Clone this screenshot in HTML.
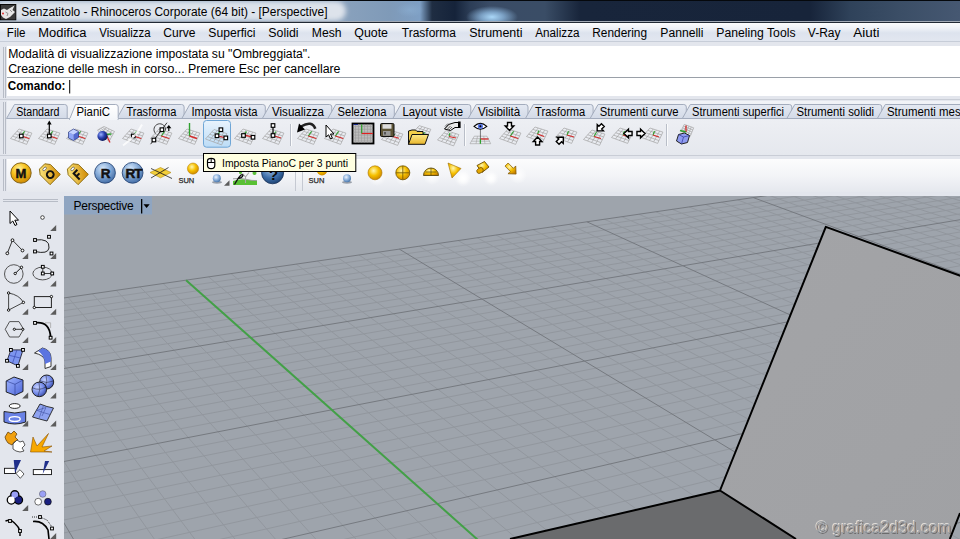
<!DOCTYPE html>
<html><head><meta charset="utf-8">
<style>
*{margin:0;padding:0;box-sizing:border-box}
html,body{width:960px;height:539px;overflow:hidden;background:#e3e6ed;font-family:"Liberation Sans",sans-serif;position:relative}
.a{position:absolute}
#title{left:0;top:0;width:960px;height:21px;overflow:hidden;
background:
radial-gradient(ellipse 26px 11px at 492px 17px,rgba(170,215,248,1) 0%,rgba(150,195,235,0.7) 45%,rgba(150,195,235,0) 100%),
radial-gradient(ellipse 14px 7px at 410px 10px,rgba(140,175,210,0.6),rgba(140,175,210,0) 100%),
linear-gradient(90deg,#8aa2bd 0px,#8aa2bd 340px,#7f9ab8 390px,#7e9fc4 420px,#1f2d42 432px,#15233a 455px,#2c3d56 470px,#3a4c66 490px,#3a4d66 545px,#18253b 580px,#17243a 810px,#2f425a 850px,#3b4e66 900px,#465872 960px);}
#title .top{left:0;top:0;width:960px;height:1px;background:#05080c}
#title .glow{left:-6px;top:1px;width:352px;height:20px;background:#dde3eb;border-radius:10px;filter:blur(2.5px)}
#title .t{left:21px;top:4px;font-size:12px;line-height:16px;color:#000;white-space:nowrap}
#tline{left:0;top:21px;width:960px;height:1px;background:#a2aab6}
#tline2{left:0;top:22px;width:960px;height:1px;background:#222a35}
#menu{left:0;top:23px;width:960px;height:18px;background:linear-gradient(#fbfcfd 0%,#eef1f7 30%,#dde3ee 55%,#e2e7f0 100%);}
#menu span{position:absolute;top:4.5px;font-size:12px;line-height:13px;color:#000;white-space:nowrap}
#mline{left:0;top:41px;width:960px;height:1px;background:#c7cdd8}
#cmd{left:7px;top:46px;width:953px;height:50px;background:#fff;}
#cmd .l{position:absolute;left:2.5px;font-size:12px;line-height:12px;color:#000;white-space:nowrap;letter-spacing:0.1px}
.vgrip{width:1px;background:#b7bcc6}
.hgrip{height:1px;background:#b7bcc6}
.tab{position:absolute;top:104px;height:15px;font-size:11px;line-height:13px;color:#000;white-space:nowrap}
</style></head><body>
<div id="title" class="a">
 <div class="glow a"></div><div class="top a"></div>
 <svg class="a" style="left:0;top:0" width="400" height="21" viewBox="0 0 400 21"><text x="21.2" y="16.2" font-family="Liberation Sans" font-size="12" textLength="306.3" lengthAdjust="spacingAndGlyphs" fill="#000">Senzatitolo - Rhinoceros Corporate (64 bit) - [Perspective]</text></svg>
</div>
<svg class="a" style="left:0;top:4px" width="17" height="17" viewBox="0 0 17 17">
 <rect x="0.5" y="0.5" width="15.3" height="15.3" fill="#3a3a3a" stroke="#0a0a0a" stroke-width="1"/>
 <path d="M1 6 L4 4.5 L7 6 L10 4 L14.5 1.5 L12.5 6 L15 8 L10 13 L6 15 L3 13.5 L1 11 Z" fill="#e6e6e6"/>
 <path d="M5.5 8 L8 9.5 L7 12 M10 6 L12 8" fill="none" stroke="#888" stroke-width="0.9"/>
 <circle cx="3" cy="9.5" r="1" fill="#e03030"/>
</svg>
<div id="tline" class="a"></div><div id="tline2" class="a"></div>
<div id="menu" class="a"></div>
<svg class="a" style="left:0;top:0" width="960" height="45" viewBox="0 0 960 45"><g font-family="Liberation Sans" font-size="12" fill="#000"><text x="6.8" y="37" textLength="18.7" lengthAdjust="spacingAndGlyphs">File</text><text x="38.3" y="37" textLength="48.2" lengthAdjust="spacingAndGlyphs">Modifica</text><text x="99.3" y="37" textLength="51.2" lengthAdjust="spacingAndGlyphs">Visualizza</text><text x="163.3" y="37" textLength="32.2" lengthAdjust="spacingAndGlyphs">Curve</text><text x="208.3" y="37" textLength="47.2" lengthAdjust="spacingAndGlyphs">Superfici</text><text x="268.3" y="37" textLength="30.2" lengthAdjust="spacingAndGlyphs">Solidi</text><text x="311.8" y="37" textLength="29.7" lengthAdjust="spacingAndGlyphs">Mesh</text><text x="354.3" y="37" textLength="33.7" lengthAdjust="spacingAndGlyphs">Quote</text><text x="401.8" y="37" textLength="54.2" lengthAdjust="spacingAndGlyphs">Trasforma</text><text x="469.3" y="37" textLength="53.2" lengthAdjust="spacingAndGlyphs">Strumenti</text><text x="535.3" y="37" textLength="44.2" lengthAdjust="spacingAndGlyphs">Analizza</text><text x="592.3" y="37" textLength="54.7" lengthAdjust="spacingAndGlyphs">Rendering</text><text x="660.3" y="37" textLength="43.2" lengthAdjust="spacingAndGlyphs">Pannelli</text><text x="716.3" y="37" textLength="79.2" lengthAdjust="spacingAndGlyphs">Paneling Tools</text><text x="807.8" y="37" textLength="32.7" lengthAdjust="spacingAndGlyphs">V-Ray</text><text x="853.3" y="37" textLength="26.2" lengthAdjust="spacingAndGlyphs">Aiuti</text></g></svg>
<div id="mline" class="a"></div>
<div class="a vgrip" style="left:3px;top:47px;height:51px"></div>
<div class="a vgrip" style="left:5px;top:47px;height:51px"></div>
<div id="cmd" class="a"></div>
<div class="a" style="left:7px;top:77px;width:953px;height:1px;background:#9aa0a8"></div>
<svg class="a" style="left:0;top:40px" width="400" height="60" viewBox="0 40 400 60"><g font-family="Liberation Sans" font-size="12" fill="#000">
<text x="8.2" y="57.9" textLength="302.3" lengthAdjust="spacingAndGlyphs">Modalità di visualizzazione impostata su "Ombreggiata".</text>
<text x="8.2" y="73.3" textLength="332.3" lengthAdjust="spacingAndGlyphs">Creazione delle mesh in corso... Premere Esc per cancellare</text>
<text x="7.7" y="90.4" font-weight="bold" textLength="57.8" lengthAdjust="spacingAndGlyphs">Comando:</text>
</g><rect x="69.2" y="80" width="1" height="13.5" fill="#000"/></svg>
<div class="a" style="left:0;top:99px;width:960px;height:1px;background:#c9cdd6"></div>
<!-- toolbar 1 -->
<div class="a" style="left:7px;top:101px;width:953px;height:54px;background:linear-gradient(#f1f3f7,#ebedf2 50%,#e5e8ee)"></div>
<div class="a" style="left:0;top:155px;width:960px;height:1px;background:#c9cdd6"></div>
<div class="a vgrip" style="left:3px;top:102px;height:52px"></div>
<div class="a vgrip" style="left:5px;top:102px;height:52px"></div>
<!-- toolbar 2 -->
<div class="a" style="left:7px;top:159px;width:953px;height:33px;background:linear-gradient(#fcfcfd,#f3f4f7 50%,#e5e8ee)"></div>
<div class="a vgrip" style="left:3px;top:159px;height:32px"></div>
<div class="a vgrip" style="left:5px;top:159px;height:32px"></div>
<div class="a" style="left:295px;top:159px;width:1px;height:32px;background:#c5c9d2"></div>
<div class="a" style="left:302px;top:159px;width:1px;height:32px;background:#c5c9d2"></div>
<svg class="a" style="left:0;top:0" width="960" height="160" viewBox="0 0 960 160">
<defs><linearGradient id="tabi" x1="0" y1="0" x2="0" y2="1"><stop offset="0" stop-color="#e4e9f2"/><stop offset="1" stop-color="#d3dae7"/></linearGradient>
<linearGradient id="taba" x1="0" y1="0" x2="0" y2="1"><stop offset="0" stop-color="#ffffff"/><stop offset="1" stop-color="#f3f5f9"/></linearGradient></defs>
<rect x="7" y="118" width="953" height="1" fill="#a9b2c1"/>
<path d="M6.5 118.5 L14.5 104.5 L64.7 104.5 Q67.2 104.5 67.2 107.0 L67.2 118.5 Z" fill="url(#tabi)" stroke="#a3acbd" stroke-width="1"/><text x="16.2" y="115.6" font-family="Liberation Sans" font-size="12" textLength="43.2" lengthAdjust="spacingAndGlyphs" fill="#000">Standard</text>
<path d="M116.8 118.5 L124.8 104.5 L181.6 104.5 Q184.1 104.5 184.1 107.0 L184.1 118.5 Z" fill="url(#tabi)" stroke="#a3acbd" stroke-width="1"/><text x="126.5" y="115.6" font-family="Liberation Sans" font-size="12" textLength="49.8" lengthAdjust="spacingAndGlyphs" fill="#000">Trasforma</text>
<path d="M181.8 118.5 L189.8 104.5 L262.8 104.5 Q265.3 104.5 265.3 107.0 L265.3 118.5 Z" fill="url(#tabi)" stroke="#a3acbd" stroke-width="1"/><text x="191.5" y="115.6" font-family="Liberation Sans" font-size="12" textLength="66.0" lengthAdjust="spacingAndGlyphs" fill="#000">Imposta vista</text>
<path d="M262.3 118.5 L270.3 104.5 L329.3 104.5 Q331.8 104.5 331.8 107.0 L331.8 118.5 Z" fill="url(#tabi)" stroke="#a3acbd" stroke-width="1"/><text x="272.0" y="115.6" font-family="Liberation Sans" font-size="12" textLength="52.0" lengthAdjust="spacingAndGlyphs" fill="#000">Visualizza</text>
<path d="M327.8 118.5 L335.8 104.5 L391.8 104.5 Q394.3 104.5 394.3 107.0 L394.3 118.5 Z" fill="url(#tabi)" stroke="#a3acbd" stroke-width="1"/><text x="337.5" y="115.6" font-family="Liberation Sans" font-size="12" textLength="49.0" lengthAdjust="spacingAndGlyphs" fill="#000">Seleziona</text>
<path d="M392.8 118.5 L400.8 104.5 L468.3 104.5 Q470.8 104.5 470.8 107.0 L470.8 118.5 Z" fill="url(#tabi)" stroke="#a3acbd" stroke-width="1"/><text x="402.5" y="115.6" font-family="Liberation Sans" font-size="12" textLength="60.5" lengthAdjust="spacingAndGlyphs" fill="#000">Layout viste</text>
<path d="M468.2 118.5 L476.2 104.5 L525.5 104.5 Q528.0 104.5 528.0 107.0 L528.0 118.5 Z" fill="url(#tabi)" stroke="#a3acbd" stroke-width="1"/><text x="477.9" y="115.6" font-family="Liberation Sans" font-size="12" textLength="42.4" lengthAdjust="spacingAndGlyphs" fill="#000">Visibilità</text>
<path d="M525.4 118.5 L533.4 104.5 L590.6 104.5 Q593.1 104.5 593.1 107.0 L593.1 118.5 Z" fill="url(#tabi)" stroke="#a3acbd" stroke-width="1"/><text x="535.1" y="115.6" font-family="Liberation Sans" font-size="12" textLength="50.2" lengthAdjust="spacingAndGlyphs" fill="#000">Trasforma</text>
<path d="M590.1 118.5 L598.1 104.5 L683.8 104.5 Q686.3 104.5 686.3 107.0 L686.3 118.5 Z" fill="url(#tabi)" stroke="#a3acbd" stroke-width="1"/><text x="599.8" y="115.6" font-family="Liberation Sans" font-size="12" textLength="78.7" lengthAdjust="spacingAndGlyphs" fill="#000">Strumenti curve</text>
<path d="M682.3 118.5 L690.3 104.5 L789.3 104.5 Q791.8 104.5 791.8 107.0 L791.8 118.5 Z" fill="url(#tabi)" stroke="#a3acbd" stroke-width="1"/><text x="692.0" y="115.6" font-family="Liberation Sans" font-size="12" textLength="92.0" lengthAdjust="spacingAndGlyphs" fill="#000">Strumenti superfici</text>
<path d="M786.8 118.5 L794.8 104.5 L879.3 104.5 Q881.8 104.5 881.8 107.0 L881.8 118.5 Z" fill="url(#tabi)" stroke="#a3acbd" stroke-width="1"/><text x="796.5" y="115.6" font-family="Liberation Sans" font-size="12" textLength="77.5" lengthAdjust="spacingAndGlyphs" fill="#000">Strumenti solidi</text>
<path d="M877.3 118.5 L885.3 104.5 L972.3 104.5 Q974.8 104.5 974.8 107.0 L974.8 118.5 Z" fill="url(#tabi)" stroke="#a3acbd" stroke-width="1"/><text x="887.0" y="115.6" font-family="Liberation Sans" font-size="12" textLength="80.0" lengthAdjust="spacingAndGlyphs" fill="#000">Strumenti mesh</text>
<path d="M69.5 119.5 L75.5 104.5 L115.7 104.5 Q118.2 104.5 118.2 107.0 L118.2 119.5 Z" fill="url(#taba)" stroke="#a3acbd" stroke-width="1"/><rect x="70.1" y="118" width="47.5" height="2" fill="#f3f5f9"/><text x="76.5" y="115.6" font-family="Liberation Sans" font-size="12" textLength="33.5" lengthAdjust="spacingAndGlyphs" fill="#000">PianiC</text>
</svg>
<svg class="a" style="left:0;top:0" width="960" height="160" viewBox="0 0 960 160">
<defs><linearGradient id="hl" x1="0" y1="0" x2="0" y2="1"><stop offset="0" stop-color="#e8f3fd"/><stop offset="1" stop-color="#bcdcf6"/></linearGradient>
<radialGradient id="bsph" cx="0.35" cy="0.35" r="0.7"><stop offset="0" stop-color="#9ab0ff"/><stop offset="0.5" stop-color="#2a40b0"/><stop offset="1" stop-color="#0a1450"/></radialGradient>
<linearGradient id="fold" x1="0" y1="0" x2="0" y2="1"><stop offset="0" stop-color="#fde98a"/><stop offset="1" stop-color="#e8b52a"/></linearGradient></defs>
<rect x="203.5" y="120.5" width="27" height="26.7" rx="3" fill="url(#hl)" stroke="#6fa6d6" stroke-width="1"/>
<path d="M10.50 138.50L26.60 144.40M10.50 138.50L19.00 129.00M12.62 136.12L27.93 141.57M14.53 139.97L22.23 130.03M14.75 133.75L29.25 138.75M18.55 141.45L25.45 131.05M16.88 131.38L30.57 135.93M22.58 142.93L28.67 132.07M19.00 129.00L31.90 133.10M26.60 144.40L31.90 133.10" stroke="#a4a4a4" stroke-width="0.7" fill="none"/><path d="M21.3 136.0L24.6 131.3" stroke="#2ea02e" stroke-width="1.1"/><path d="M21.3 136.0L29.3 138.6" stroke="#d42a2a" stroke-width="1.1"/><rect x="19.5" y="134.2" width="3.6" height="3.6" fill="#fff" stroke="#000" stroke-width="1.15"/>
<path d="M38.50 138.50L54.60 144.40M38.50 138.50L47.00 129.00M40.62 136.12L55.92 141.57M42.52 139.97L50.23 130.03M42.75 133.75L57.25 138.75M46.55 141.45L53.45 131.05M44.88 131.38L58.58 135.93M50.58 142.93L56.67 132.07M47.00 129.00L59.90 133.10M54.60 144.40L59.90 133.10" stroke="#a4a4a4" stroke-width="0.7" fill="none"/><path d="M49.3 136.0L52.6 131.3" stroke="#2ea02e" stroke-width="1.1"/><path d="M49.3 136.0L57.3 138.6" stroke="#d42a2a" stroke-width="1.1"/><rect x="47.5" y="134.2" width="3.6" height="3.6" fill="#fff" stroke="#000" stroke-width="1.15"/><path d="M49.3 134.0L49.3 123.0" stroke="#000" stroke-width="1.2"/><path d="M49.3 120.5 L47.0 124.5 L51.6 124.5Z" fill="#000"/>
<path d="M66.50 138.50L82.60 144.40M66.50 138.50L75.00 129.00M68.62 136.12L83.92 141.57M70.53 139.97L78.22 130.03M70.75 133.75L85.25 138.75M74.55 141.45L81.45 131.05M72.88 131.38L86.58 135.93M78.57 142.93L84.68 132.07M75.00 129.00L87.90 133.10M82.60 144.40L87.90 133.10" stroke="#a4a4a4" stroke-width="0.7" fill="none"/><path d="M77.3 136.0L80.6 131.3" stroke="#2ea02e" stroke-width="1.1"/><path d="M77.3 136.0L85.3 138.6" stroke="#d42a2a" stroke-width="1.1"/><path d="M68.5 132 L73.5 129 L78.5 131.5 L73.5 134.5 Z" fill="#c4d2ff"/><path d="M68.5 132 L73.5 134.5 L73.5 140.5 L68.5 138 Z" fill="#8fa6f6"/><path d="M73.5 134.5 L78.5 131.5 L78.5 137.5 L73.5 140.5 Z" fill="#5268d0"/><path d="M68.5 132 L73.5 129 L78.5 131.5 L78.5 137.5 L73.5 140.5 L68.5 138 Z" fill="none" stroke="#2a3a80" stroke-width="0.7"/>
<path d="M97.50 130.00L109.00 141.50M97.50 130.00L104.00 126.50M99.12 129.12L110.38 139.00M100.38 132.88L106.62 127.75M100.75 128.25L111.75 136.50M103.25 135.75L109.25 129.00M102.38 127.38L113.12 134.00M106.12 138.62L111.88 130.25M104.00 126.50L114.50 131.50M109.00 141.50L114.50 131.50" stroke="#a4a4a4" stroke-width="0.7" fill="none"/><path d="M106.0 134.5L111.5 134.0" stroke="#2ea02e" stroke-width="1.3"/><path d="M106.0 134.5L110.0 142.5" stroke="#d42a2a" stroke-width="1.3"/><circle cx="102.5" cy="136" r="5.1" fill="url(#bsph)"/>
<path d="M122.50 138.50L138.60 144.40M122.50 138.50L131.00 129.00M124.62 136.12L139.93 141.57M126.53 139.97L134.22 130.03M126.75 133.75L141.25 138.75M130.55 141.45L137.45 131.05M128.88 131.38L142.57 135.93M134.57 142.93L140.68 132.07M131.00 129.00L143.90 133.10M138.60 144.40L143.90 133.10" stroke="#a4a4a4" stroke-width="0.7" fill="none"/><path d="M133.3 136.0L136.6 131.3" stroke="#2ea02e" stroke-width="1.1"/><path d="M133.3 136.0L141.3 138.6" stroke="#d42a2a" stroke-width="1.1"/><rect x="131.5" y="134.2" width="3.6" height="3.6" fill="#fff" stroke="#000" stroke-width="1.15"/><path d="M123.0 145.5 Q137.0 135.5 142.0 124.5" stroke="#fff" stroke-width="2" fill="none" opacity="0.75"/>
<path d="M150.50 138.50L166.60 144.40M150.50 138.50L159.00 129.00M152.62 136.12L167.93 141.57M154.53 139.97L162.22 130.03M154.75 133.75L169.25 138.75M158.55 141.45L165.45 131.05M156.88 131.38L170.57 135.93M162.57 142.93L168.68 132.07M159.00 129.00L171.90 133.10M166.60 144.40L171.90 133.10" stroke="#a4a4a4" stroke-width="0.7" fill="none"/><path d="M161.3 136.0L164.6 131.3" stroke="#2ea02e" stroke-width="1.1"/><path d="M161.3 136.0L169.3 138.6" stroke="#d42a2a" stroke-width="1.1"/><path d="M155.5 133.5 A5.8 5.8 0 1 1 165.5 130.5" fill="none" stroke="#333" stroke-width="0.9"/><path d="M150.6 144.2 L167 122.7" stroke="#222" stroke-width="0.9"/><rect x="160.1" y="127.9" width="3.6" height="3.6" fill="#fff" stroke="#000" stroke-width="1.15"/><rect x="152.1" y="138.2" width="3.6" height="3.6" fill="#fff" stroke="#000" stroke-width="1.15"/><path d="M168.8 125 l-2.6 3.2 h5.2z" fill="#000"/><path d="M168.8 127.5 v3.5" stroke="#000" stroke-width="1.2"/>
<path d="M178.50 138.50L194.60 144.40M178.50 138.50L187.00 129.00M180.62 136.12L195.93 141.57M182.53 139.97L190.22 130.03M182.75 133.75L197.25 138.75M186.55 141.45L193.45 131.05M184.88 131.38L198.57 135.93M190.57 142.93L196.68 132.07M187.00 129.00L199.90 133.10M194.60 144.40L199.90 133.10" stroke="#a4a4a4" stroke-width="0.7" fill="none"/><path d="M189.5 123 L189.5 136" stroke="#2ea02e" stroke-width="1.4"/><path d="M189.5 136 L197 138.5" stroke="#d42a2a" stroke-width="1.4"/>
<path d="M205.50 139.00L221.60 144.90M205.50 139.00L214.00 129.50M207.62 136.62L222.93 142.07M209.53 140.47L217.22 130.53M209.75 134.25L224.25 139.25M213.55 141.95L220.45 131.55M211.88 131.88L225.57 136.43M217.57 143.43L223.68 132.57M214.00 129.50L226.90 133.60M221.60 144.90L226.90 133.60" stroke="#a4a4a4" stroke-width="0.7" fill="none"/><path d="M217.0 135.8L220.5 130.5" stroke="#2ea02e" stroke-width="1.1"/><path d="M217.0 135.8L225.8 137.9" stroke="#d42a2a" stroke-width="1.1"/><rect x="219.1" y="127.9" width="3.6" height="3.6" fill="#fff" stroke="#000" stroke-width="1.15"/><rect x="215.2" y="134.0" width="3.6" height="3.6" fill="#fff" stroke="#000" stroke-width="1.15"/><rect x="224.0" y="136.1" width="3.6" height="3.6" fill="#fff" stroke="#000" stroke-width="1.15"/>
<path d="M234.50 138.50L250.60 144.40M234.50 138.50L243.00 129.00M236.62 136.12L251.93 141.57M238.53 139.97L246.22 130.03M238.75 133.75L253.25 138.75M242.55 141.45L249.45 131.05M240.88 131.38L254.57 135.93M246.57 142.93L252.68 132.07M243.00 129.00L255.90 133.10M250.60 144.40L255.90 133.10" stroke="#a4a4a4" stroke-width="0.7" fill="none"/><path d="M244.0 135.0L246.5 131.5" stroke="#2ea02e" stroke-width="1.3"/><path d="M244.0 135.0L252.0 136.8" stroke="#d42a2a" stroke-width="1.3"/><rect x="241.7" y="133.7" width="3.6" height="3.6" fill="#fff" stroke="#000" stroke-width="1.15"/><rect x="251.2" y="135.5" width="3.6" height="3.6" fill="#fff" stroke="#000" stroke-width="1.15"/>
<path d="M262.50 138.50L278.60 144.40M262.50 138.50L271.00 129.00M264.62 136.12L279.93 141.57M266.52 139.97L274.23 130.03M266.75 133.75L281.25 138.75M270.55 141.45L277.45 131.05M268.88 131.38L282.57 135.93M274.58 142.93L280.67 132.07M271.00 129.00L283.90 133.10M278.60 144.40L283.90 133.10" stroke="#a4a4a4" stroke-width="0.7" fill="none"/><path d="M273.0 135.5L276.0 131.5" stroke="#2ea02e" stroke-width="1.1"/><path d="M273.0 135.5L281.0 138.0" stroke="#d42a2a" stroke-width="1.1"/><path d="M273.0 135.5L273.0 125.5" stroke="#000" stroke-width="1.2"/><rect x="271.2" y="133.7" width="3.6" height="3.6" fill="#fff" stroke="#000" stroke-width="1.15"/><rect x="271.2" y="123.7" width="3.6" height="3.6" fill="#fff" stroke="#000" stroke-width="1.15"/>
<rect x="290" y="124" width="1" height="22" fill="#b9bec8"/><rect x="291" y="124" width="1" height="22" fill="#fafbfc"/>
<path d="M297.50 138.50L313.60 144.40M297.50 138.50L306.00 129.00M299.62 136.12L314.93 141.57M301.52 139.97L309.23 130.03M301.75 133.75L316.25 138.75M305.55 141.45L312.45 131.05M303.88 131.38L317.57 135.93M309.58 142.93L315.67 132.07M306.00 129.00L318.90 133.10M313.60 144.40L318.90 133.10" stroke="#a4a4a4" stroke-width="0.7" fill="none"/><path d="M308.3 136.0L311.6 131.3" stroke="#2ea02e" stroke-width="1.1"/><path d="M308.3 136.0L316.3 138.6" stroke="#d42a2a" stroke-width="1.1"/><path d="M315.3 128.8 Q312 120 301 126.5" stroke="#222" stroke-width="2.6" fill="none"/><path d="M297 132.5 L299 123.5 L305 129.5Z" fill="#000"/>
<path d="M324.50 138.50L340.60 144.40M324.50 138.50L333.00 129.00M326.62 136.12L341.93 141.57M328.52 139.97L336.23 130.03M328.75 133.75L343.25 138.75M332.55 141.45L339.45 131.05M330.88 131.38L344.57 135.93M336.58 142.93L342.67 132.07M333.00 129.00L345.90 133.10M340.60 144.40L345.90 133.10" stroke="#a4a4a4" stroke-width="0.7" fill="none"/><path d="M335.3 136.0L338.6 131.3" stroke="#2ea02e" stroke-width="1.1"/><path d="M335.3 136.0L343.3 138.6" stroke="#d42a2a" stroke-width="1.1"/><path d="M326 125 L326 137 L328.6 134.8 L330.6 139 L332.4 138.2 L330.5 134 L334 134 Z" fill="#fff" stroke="#000" stroke-width="1" stroke-linejoin="round"/>
<rect x="352.5" y="123.5" width="21" height="20" fill="#bcbcbc" stroke="#000" stroke-width="1.8"/><path d="M355.5 124.5V142.5M353.5 126.4H372.5M358.5 124.5V142.5M353.5 129.3H372.5M361.5 124.5V142.5M353.5 132.2H372.5M364.5 124.5V142.5M353.5 135.1H372.5M367.5 124.5V142.5M353.5 138.0H372.5M370.5 124.5V142.5M353.5 140.9H372.5" stroke="#9a9a9a" stroke-width="0.6"/><path d="M353.5 124.5H358" stroke="#1a2a8a" stroke-width="1"/><path d="M361.7 124.3V133.5" stroke="#2ea02e" stroke-width="1.2"/><path d="M361.7 133.5H372.8" stroke="#e02020" stroke-width="1.2"/>
<path d="M381.50 139.50L397.60 145.40M381.50 139.50L390.00 130.00M383.62 137.12L398.93 142.57M385.52 140.97L393.23 131.03M385.75 134.75L400.25 139.75M389.55 142.45L396.45 132.05M387.88 132.38L401.57 136.93M393.58 143.93L399.67 133.07M390.00 130.00L402.90 134.10M397.60 145.40L402.90 134.10" stroke="#a4a4a4" stroke-width="0.7" fill="none"/><path d="M393.0 136.5L394.5 134.0" stroke="#2ea02e" stroke-width="1.1"/><path d="M393.0 136.5L399.0 138.3" stroke="#d42a2a" stroke-width="1.1"/><rect x="380.5" y="123.5" width="13.5" height="13" rx="1.2" fill="#5d5436" stroke="#111" stroke-width="1"/><rect x="382.5" y="124.2" width="9" height="4.5" fill="#dcdcdc"/><rect x="383" y="131" width="7.5" height="4.8" fill="#9a9a9a"/><rect x="384" y="132" width="2" height="2.5" fill="#555"/>
<path d="M411.55 134.20L426.04 139.51M411.55 134.20L419.20 125.65M413.46 132.06L427.23 136.97M415.17 135.53L422.10 126.57M415.38 129.93L428.43 134.43M418.80 136.85L425.00 127.50M417.29 127.79L429.62 131.88M422.42 138.18L427.91 128.42M419.20 125.65L430.81 129.34M426.04 139.51L430.81 129.34" stroke="#a4a4a4" stroke-width="0.7" fill="none"/><path d="M422.0 134.5L425.0 132.5" stroke="#2ea02e" stroke-width="1.1"/><path d="M422.0 134.5L424.0 138.5" stroke="#d42a2a" stroke-width="1.1"/><path d="M408.5 144.3 L408.5 131 L412 130 L415.5 130 L417 131.5 L423 131.5 L423 134.5 Z" fill="#f3cf4a" stroke="#111" stroke-width="1"/><path d="M408.5 144.3 L412 134.5 L428.5 134.5 L425 144.3 Z" fill="url(#fold)" stroke="#111" stroke-width="1"/>
<path d="M437.50 140.00L453.60 145.90M437.50 140.00L446.00 130.50M439.62 137.62L454.93 143.07M441.52 141.47L449.23 131.53M441.75 135.25L456.25 140.25M445.55 142.95L452.45 132.55M443.88 132.88L457.57 137.43M449.58 144.43L455.67 133.57M446.00 130.50L458.90 134.60M453.60 145.90L458.90 134.60" stroke="#a4a4a4" stroke-width="0.7" fill="none"/><path d="M449.0 136.5L450.0 133.0" stroke="#2ea02e" stroke-width="1.1"/><path d="M449.0 136.5L456.0 138.0" stroke="#d42a2a" stroke-width="1.1"/><path d="M444.5 129 L448.5 124.5 L455 122.5 L459 122.5 L459 127.5 L455 127.5 L450.5 130.5 Z" fill="#e8e8e8" stroke="#000" stroke-width="1"/><path d="M445.5 128 l3.5 -3.5 M447 129.5 l3.5 -3.5 M449 130 l3 -3 M445 126.5 l3 -3" stroke="#555" stroke-width="0.9"/><rect x="458" y="121.5" width="2.6" height="6.5" fill="#000"/>
<rect x="464" y="124" width="1" height="22" fill="#b9bec8"/><rect x="465" y="124" width="1" height="22" fill="#fafbfc"/>
<path d="M474.3 136.2 L487 136.2 L490.7 143.7 L470 143.7 Z" fill="none" stroke="#a0a0a0" stroke-width="0.6"/><path d="M472.6 138.7 H488.8 M471.3 141.2 H489.6 M477.5 136.2 L476 143.7 M483.7 136.2 L485 143.7" stroke="#a0a0a0" stroke-width="0.6"/><path d="M480.4 129.5 V139" stroke="#000" stroke-width="1" stroke-dasharray="1 1"/><path d="M480.4 139 H488.5" stroke="#d42a2a" stroke-width="1.3"/><path d="M480.4 139 V143.8" stroke="#2ea02e" stroke-width="1.3"/><path d="M474 126.3 Q480.4 120.5 486.8 126.3 Q480.4 132 474 126.3Z" fill="#fff" stroke="#000" stroke-width="1.1"/><circle cx="480.4" cy="126.3" r="2.6" fill="#5a78e8"/><circle cx="480.4" cy="126.3" r="1" fill="#000"/>
<path d="M499.50 138.50L515.60 144.40M499.50 138.50L508.00 129.00M501.62 136.12L516.92 141.57M503.52 139.97L511.23 130.03M503.75 133.75L518.25 138.75M507.55 141.45L514.45 131.05M505.88 131.38L519.58 135.93M511.58 142.93L517.67 132.07M508.00 129.00L520.90 133.10M515.60 144.40L520.90 133.10" stroke="#a4a4a4" stroke-width="0.7" fill="none"/><path d="M510.3 136.0L513.6 131.3" stroke="#2ea02e" stroke-width="1.1"/><path d="M510.3 136.0L518.3 138.6" stroke="#d42a2a" stroke-width="1.1"/><polygon points="507.52,122.45 511.48,122.45 511.48,126.05 513.82,126.05 509.50,130.55 505.18,126.05 507.52,126.05" fill="#fff" stroke="#000" stroke-width="1.4" stroke-linejoin="miter"/>
<path d="M526.50 136.50L542.60 142.40M526.50 136.50L535.00 127.00M528.62 134.12L543.92 139.57M530.52 137.97L538.23 128.03M530.75 131.75L545.25 136.75M534.55 139.45L541.45 129.05M532.88 129.38L546.58 133.93M538.58 140.93L544.67 130.07M535.00 127.00L547.90 131.10M542.60 142.40L547.90 131.10" stroke="#a4a4a4" stroke-width="0.7" fill="none"/><path d="M537.5 134.0L539.0 130.5" stroke="#2ea02e" stroke-width="1.1"/><path d="M537.5 134.0L544.0 136.5" stroke="#d42a2a" stroke-width="1.1"/><polygon points="539.58,145.05 535.62,145.05 535.62,141.45 533.28,141.45 537.60,136.95 541.92,141.45 539.58,141.45" fill="#fff" stroke="#000" stroke-width="1.4" stroke-linejoin="miter"/>
<path d="M555.50 137.50L571.60 143.40M555.50 137.50L564.00 128.00M557.62 135.12L572.92 140.57M559.52 138.97L567.23 129.03M559.75 132.75L574.25 137.75M563.55 140.45L570.45 130.05M561.88 130.38L575.58 134.93M567.58 141.93L573.67 131.07M564.00 128.00L576.90 132.10M571.60 143.40L576.90 132.10" stroke="#a4a4a4" stroke-width="0.7" fill="none"/><path d="M567.0 135.0L568.5 131.0" stroke="#2ea02e" stroke-width="1.1"/><path d="M567.0 135.0L574.0 137.0" stroke="#d42a2a" stroke-width="1.1"/><polygon points="559.04,144.26 556.24,141.46 558.78,138.92 557.13,137.26 563.36,137.14 563.24,143.37 561.58,141.72" fill="#fff" stroke="#000" stroke-width="1.4" stroke-linejoin="miter"/>
<path d="M583.50 139.50L599.60 145.40M583.50 139.50L592.00 130.00M585.62 137.12L600.92 142.57M587.52 140.97L595.23 131.03M587.75 134.75L602.25 139.75M591.55 142.45L598.45 132.05M589.88 132.38L603.58 136.93M595.58 143.93L601.67 133.07M592.00 130.00L604.90 134.10M599.60 145.40L604.90 134.10" stroke="#a4a4a4" stroke-width="0.7" fill="none"/><path d="M594.0 136.5L596.5 132.0" stroke="#2ea02e" stroke-width="1.1"/><path d="M594.0 136.5L601.0 138.5" stroke="#d42a2a" stroke-width="1.1"/><polygon points="601.46,123.74 604.26,126.54 601.72,129.08 603.37,130.74 597.14,130.86 597.26,124.63 598.92,126.28" fill="#fff" stroke="#000" stroke-width="1.4" stroke-linejoin="miter"/>
<path d="M611.50 137.50L627.60 143.40M611.50 137.50L620.00 128.00M613.62 135.12L628.92 140.57M615.52 138.97L623.23 129.03M615.75 132.75L630.25 137.75M619.55 140.45L626.45 130.05M617.88 130.38L631.58 134.93M623.58 141.93L629.67 131.07M620.00 128.00L632.90 132.10M627.60 143.40L632.90 132.10" stroke="#a4a4a4" stroke-width="0.7" fill="none"/><path d="M623.0 135.0L624.5 131.0" stroke="#2ea02e" stroke-width="1.1"/><path d="M623.0 135.0L629.0 137.0" stroke="#d42a2a" stroke-width="1.1"/><polygon points="632.05,131.52 632.05,135.48 628.45,135.48 628.45,137.82 623.95,133.50 628.45,129.18 628.45,131.52" fill="#fff" stroke="#000" stroke-width="1.4" stroke-linejoin="miter"/>
<path d="M641.50 137.50L657.60 143.40M641.50 137.50L650.00 128.00M643.62 135.12L658.92 140.57M645.52 138.97L653.23 129.03M645.75 132.75L660.25 137.75M649.55 140.45L656.45 130.05M647.88 130.38L661.58 134.93M653.58 141.93L659.67 131.07M650.00 128.00L662.90 132.10M657.60 143.40L662.90 132.10" stroke="#a4a4a4" stroke-width="0.7" fill="none"/><path d="M653.0 135.0L654.5 131.0" stroke="#2ea02e" stroke-width="1.1"/><path d="M653.0 135.0L659.0 137.0" stroke="#d42a2a" stroke-width="1.1"/><polygon points="636.95,135.48 636.95,131.52 640.55,131.52 640.55,129.18 645.05,133.50 640.55,137.82 640.55,135.48" fill="#fff" stroke="#000" stroke-width="1.4" stroke-linejoin="miter"/>
<rect x="666" y="124" width="1" height="22" fill="#b9bec8"/><rect x="667" y="124" width="1" height="22" fill="#fafbfc"/>
<path d="M680.90 131.20L690.25 136.30M680.90 131.20L684.30 124.40M681.75 129.50L691.10 134.18M683.24 132.47L686.64 125.25M682.60 127.80L691.95 132.05M685.58 133.75L688.97 126.10M683.45 126.10L692.80 129.93M687.91 135.03L691.31 126.95M684.30 124.40L693.65 127.80M690.25 136.30L693.65 127.80" stroke="#a4a4a4" stroke-width="0.7" fill="none"/><path d="M686 132 V125.5" stroke="#d42a2a" stroke-width="1.3"/><path d="M686 132 L680 130.5" stroke="#2ea02e" stroke-width="1.3"/><path d="M676.5 141 L678.5 134.5 L684.5 133 L689.5 135.5 L687.5 142.5 L681.5 144 Z" fill="#8e9bf0" stroke="#222" stroke-width="1"/><path d="M678.5 134.5 L683.5 137 L689.5 135.5 M683.5 137 L681.5 144" stroke="#30389a" stroke-width="0.7" fill="none"/>
</svg>
<svg class="a" style="left:0;top:0" width="960" height="200" viewBox="0 0 960 200">
<defs>
<radialGradient id="gold" cx="0.4" cy="0.3" r="0.75"><stop offset="0" stop-color="#fff3a0"/><stop offset="0.45" stop-color="#f7c21e"/><stop offset="1" stop-color="#c98300"/></radialGradient>
<radialGradient id="blu" cx="0.4" cy="0.3" r="0.75"><stop offset="0" stop-color="#d6e8fb"/><stop offset="0.5" stop-color="#86abd8"/><stop offset="1" stop-color="#3b66a0"/></radialGradient>
<linearGradient id="tag" x1="0" y1="0" x2="1" y2="1"><stop offset="0" stop-color="#fff08a"/><stop offset="1" stop-color="#d08800"/></linearGradient>
<radialGradient id="sball" cx="0.4" cy="0.35" r="0.7"><stop offset="0" stop-color="#fff7b0"/><stop offset="0.5" stop-color="#f6c000"/><stop offset="1" stop-color="#c88200"/></radialGradient>
<radialGradient id="bball" cx="0.4" cy="0.35" r="0.7"><stop offset="0" stop-color="#f0f6ff"/><stop offset="0.5" stop-color="#8fb2dc"/><stop offset="1" stop-color="#3f6fa6"/></radialGradient>
<radialGradient id="globe" cx="0.4" cy="0.3" r="0.75"><stop offset="0" stop-color="#a9c6ea"/><stop offset="0.6" stop-color="#3d6ea8"/><stop offset="1" stop-color="#1b3e6e"/></radialGradient>
<radialGradient id="wglow" cx="0.5" cy="0.5" r="0.5"><stop offset="0" stop-color="#ffffff" stop-opacity="0.95"/><stop offset="1" stop-color="#ffffff" stop-opacity="0"/></radialGradient>
</defs>
<circle cx="21" cy="173" r="10.2" fill="url(#gold)" stroke="#7a5a10" stroke-width="0.9"/><text x="21" y="178.2" font-family="Liberation Sans" font-weight="bold" font-size="13" text-anchor="middle" fill="#111" stroke="#111" stroke-width="0.5">M</text>
<g transform="rotate(-45 49 173)"><path d="M41.5 168 L45 163.5 L52.5 163.5 L56 168 L56 182 L41.5 182 Z" fill="url(#tag)" stroke="#8a6a10" stroke-width="0.9"/><ellipse cx="48.8" cy="167" rx="2.2" ry="1.2" fill="#fff" stroke="#444" stroke-width="0.6"/><circle cx="48.8" cy="175" r="3.4" fill="none" stroke="#111" stroke-width="2"/></g>
<g transform="rotate(-45 77 173)"><path d="M69.5 168 L73 163.5 L80.5 163.5 L84 168 L84 182 L69.5 182 Z" fill="url(#tag)" stroke="#8a6a10" stroke-width="0.9"/><ellipse cx="76.8" cy="167" rx="2.2" ry="1.2" fill="#fff" stroke="#444" stroke-width="0.6"/><path d="M79.5 171 H74.3 V179.5 M74.3 175 H78.5" fill="none" stroke="#111" stroke-width="2"/></g>
<circle cx="105" cy="172.8" r="10.4" fill="url(#blu)" stroke="#2b4a78" stroke-width="0.9"/><text x="105.5" y="178" font-family="Liberation Sans" font-weight="bold" font-size="13.5" text-anchor="middle" fill="#111" stroke="#111" stroke-width="0.5">R</text>
<circle cx="132.6" cy="172.8" r="10.4" fill="url(#blu)" stroke="#2b4a78" stroke-width="0.9"/><text x="133.4" y="178" font-family="Liberation Sans" font-weight="bold" font-size="13.5" text-anchor="middle" letter-spacing="-1" fill="#111" stroke="#111" stroke-width="0.5">RT</text>
<path d="M150 172.5 L160.5 167.5 L171 172.5 L160.5 177.8 Z" fill="#f2cf3a" stroke="#b48a10" stroke-width="0.6"/><path d="M155 170 L166 175.2 M155.3 175.2 L165.8 170" stroke="#b48a10" stroke-width="0.5"/><path d="M151 168.5 L172 178.5 M151 178 L168.5 167.5" stroke="#222" stroke-width="0.8"/>
<circle cx="193" cy="168.6" r="5.6" fill="url(#sball)" stroke="#b07a00" stroke-width="0.5"/><text x="186.3" y="183.3" font-family="Liberation Sans" font-size="7.5" text-anchor="middle" fill="#2a2a2a" stroke="#2a2a2a" stroke-width="0.25">SUN</text>
<ellipse cx="217" cy="182.3" rx="5" ry="1.4" fill="#9aa0aa"/><circle cx="216.8" cy="178.3" r="4" fill="url(#bball)"/><path d="M224 185.8 L229.5 180.3 L229.5 185.8Z" fill="#5c5c5c"/>
<path d="M233 181 Q240 178.5 246 179.5 Q252 180.5 257 180.5 L257 185 L233 185Z" fill="#58c034"/><path d="M233 178.8 Q241 177.5 246 179.3 Q252 180.8 257 180.6" stroke="#9a9a9a" stroke-width="0.9" fill="none"/><path d="M245.5 183 V177 L242.5 173.5 M245.5 177 L249 172.5" stroke="#a8a8a8" stroke-width="1.1" fill="none"/><path d="M234.5 184.5 Q238 178 241 175 Q242.5 174 243 175.5 Q242 178 238.5 178.5" stroke="#111" stroke-width="1.2" fill="none"/><circle cx="240.5" cy="172.5" r="1.5" fill="#5ac03a"/><circle cx="254.5" cy="173" r="2" fill="#5ac03a"/>
<circle cx="272.6" cy="172.8" r="11" fill="url(#globe)" stroke="#173057" stroke-width="0.8"/><text x="273.5" y="179.8" font-family="Liberation Sans" font-weight="bold" font-size="15" text-anchor="middle" fill="#0b0b0b">?</text>
<circle cx="322" cy="170" r="5.4" fill="url(#sball)"/><text x="316.5" y="183" font-family="Liberation Sans" font-size="7.5" text-anchor="middle" fill="#2a2a2a" stroke="#2a2a2a" stroke-width="0.25">SUN</text>
<ellipse cx="347" cy="182.3" rx="5" ry="1.4" fill="#9aa0aa"/><circle cx="347" cy="178.3" r="4" fill="url(#bball)"/>
<circle cx="377" cy="177" r="9" fill="url(#wglow)"/>
<circle cx="404" cy="177" r="9" fill="url(#wglow)"/>
<circle cx="432" cy="176" r="9" fill="url(#wglow)"/>
<circle cx="463" cy="178" r="9" fill="url(#wglow)"/>
<circle cx="463" cy="178" r="7" fill="url(#wglow)"/>
<circle cx="491" cy="178" r="8" fill="url(#wglow)"/>
<circle cx="491" cy="178" r="6" fill="url(#wglow)"/>
<circle cx="518" cy="175" r="9" fill="url(#wglow)"/>
<circle cx="375" cy="172.8" r="7" fill="url(#sball)" stroke="#a87000" stroke-width="0.6"/>
<circle cx="402.8" cy="172.8" r="7" fill="url(#sball)" stroke="#6a5000" stroke-width="0.8"/><path d="M396 172.8 H409.6 M402.8 166 V179.6" stroke="#6a5000" stroke-width="0.8"/>
<path d="M423.5 175.5 A7.5 7.5 0 0 1 438.5 175.5 Z" fill="url(#sball)" stroke="#5a4a10" stroke-width="0.9"/><path d="M431 168 V175.5 M425.5 172 H436.5" stroke="#5a4a10" stroke-width="0.7"/>
<path d="M448 163 L461 168.5 L452 178 Z" fill="url(#sball)" stroke="#a07000" stroke-width="0.6"/>
<path d="M477 165.5 L484.5 161.5 L489 167 L482 172.5 Z" fill="url(#sball)" stroke="#6a4a00" stroke-width="0.9"/><ellipse cx="480" cy="170.5" rx="3.5" ry="2.5" transform="rotate(-35 480 170.5)" fill="#e6a800" stroke="#6a4a00" stroke-width="0.7"/>
<polygon points="508.11,162.99 513.41,168.30 515.74,165.96 516.10,174.10 507.96,173.74 510.30,171.41 504.99,166.11" fill="url(#sball)" stroke="#7a5200" stroke-width="0.7" stroke-linejoin="round"/>
</svg>
<!-- left toolbar -->
<div class="a hgrip" style="left:3px;top:199px;width:55px"></div>
<div class="a hgrip" style="left:3px;top:201px;width:55px"></div>
<svg class="a" style="left:0;top:0" width="64" height="539" viewBox="0 0 64 539">
<defs><linearGradient id="lbox" x1="0" y1="0" x2="1" y2="1"><stop offset="0" stop-color="#9fb4ff"/><stop offset="1" stop-color="#4d66d8"/></linearGradient>
<radialGradient id="lsph" cx="0.35" cy="0.35" r="0.75"><stop offset="0" stop-color="#c6d2ff"/><stop offset="0.6" stop-color="#6f86e6"/><stop offset="1" stop-color="#33449a"/></radialGradient></defs>
<path d="M10 211 L10 223.5 L12.8 221 L15 225.5 L17 224.5 L14.8 220.2 L18.5 220.2 Z" fill="#fff" stroke="#000" stroke-width="1" stroke-linejoin="round"/>
<circle cx="42.5" cy="217.5" r="1.8" fill="#fff" stroke="#333" stroke-width="0.9"/><path d="M50.2 231.0 L56.2 225.0 L56.2 231.0 Z" fill="#5c5c5c"/>
<path d="M7.3 253.3 L12.5 240.2 L22.5 250.5" fill="none" stroke="#222" stroke-width="0.9"/><circle cx="7.3" cy="253.3" r="1.4" fill="#fff" stroke="#000" stroke-width="0.9"/><circle cx="12.5" cy="240.2" r="1.4" fill="#fff" stroke="#000" stroke-width="0.9"/><circle cx="22.5" cy="250.5" r="1.4" fill="#fff" stroke="#000" stroke-width="0.9"/><path d="M22.2 259.0 L28.2 253.0 L28.2 259.0 Z" fill="#5c5c5c"/>
<path d="M35 240 Q50 238 49 248 Q48 254.5 35 251.5" fill="none" stroke="#222" stroke-width="1"/><rect x="33.6" y="238.6" width="2.8" height="2.8" fill="#fff" stroke="#000" stroke-width="1"/><rect x="47.6" y="235.4" width="2.8" height="2.8" fill="#fff" stroke="#000" stroke-width="1"/><rect x="33.6" y="250.1" width="2.8" height="2.8" fill="#fff" stroke="#000" stroke-width="1"/><rect x="50.1" y="252.1" width="2.8" height="2.8" fill="#fff" stroke="#000" stroke-width="1"/><path d="M50.2 259.0 L56.2 253.0 L56.2 259.0 Z" fill="#5c5c5c"/>
<circle cx="13.8" cy="274" r="9.3" fill="none" stroke="#444" stroke-width="0.9"/><path d="M15.2 273.5 L21.5 267.3" stroke="#111" stroke-width="1"/><circle cx="15.2" cy="273.5" r="1.2" fill="#fff" stroke="#000" stroke-width="0.9"/><circle cx="21.5" cy="267.3" r="1.2" fill="#fff" stroke="#000" stroke-width="0.9"/><path d="M22.2 286.5 L28.2 280.5 L28.2 286.5 Z" fill="#5c5c5c"/>
<ellipse cx="42.6" cy="273.5" rx="9.7" ry="6.4" fill="none" stroke="#444" stroke-width="0.9"/><path d="M42.8 266.8 V273.5 H52.2" fill="none" stroke="#111" stroke-width="0.8"/><rect x="41.4" y="265.4" width="2.8" height="2.8" fill="#fff" stroke="#000" stroke-width="1"/><rect x="41.4" y="272.1" width="2.8" height="2.8" fill="#fff" stroke="#000" stroke-width="1"/><rect x="50.8" y="272.1" width="2.8" height="2.8" fill="#fff" stroke="#000" stroke-width="1"/><path d="M50.2 286.5 L56.2 280.5 L56.2 286.5 Z" fill="#5c5c5c"/>
<path d="M8.6 293 Q19.5 295 23.4 302.4 L8.6 310.1 Z" fill="none" stroke="#333" stroke-width="0.9"/><circle cx="8.6" cy="293.0" r="1.2" fill="#fff" stroke="#000" stroke-width="0.9"/><circle cx="23.4" cy="302.4" r="1.2" fill="#fff" stroke="#000" stroke-width="0.9"/><circle cx="8.6" cy="310.1" r="1.2" fill="#fff" stroke="#000" stroke-width="0.9"/><path d="M22.2 314.8 L28.2 308.8 L28.2 314.8 Z" fill="#5c5c5c"/>
<rect x="34.3" y="296.6" width="17.1" height="10.9" fill="none" stroke="#222" stroke-width="1"/><circle cx="34.3" cy="307.5" r="1.2" fill="#fff" stroke="#000" stroke-width="0.9"/><circle cx="51.4" cy="296.6" r="1.2" fill="#fff" stroke="#000" stroke-width="0.9"/><path d="M50.2 314.8 L56.2 308.8 L56.2 314.8 Z" fill="#5c5c5c"/>
<path d="M9.6 321.6 H19 L23.6 329.3 L19 337 H9.6 L5.2 329.3 Z" fill="none" stroke="#444" stroke-width="0.9"/><path d="M14.3 329.3 H22.8" stroke="#222" stroke-width="0.9"/><circle cx="14.3" cy="329.3" r="1.1" fill="#fff" stroke="#000" stroke-width="0.9"/><circle cx="22.8" cy="329.3" r="1.1" fill="#fff" stroke="#000" stroke-width="0.9"/><path d="M22.2 342.9 L28.2 336.9 L28.2 342.9 Z" fill="#5c5c5c"/>
<path d="M45 322.8 L50.6 322.8 L50.6 328" fill="none" stroke="#a0a0a0" stroke-width="0.7"/><path d="M35 322.9 Q50 321 50.6 337.7" fill="none" stroke="#000" stroke-width="1.8"/><rect x="33.6" y="321.5" width="2.8" height="2.8" fill="#fff" stroke="#000" stroke-width="1"/><rect x="49.2" y="336.3" width="2.8" height="2.8" fill="#fff" stroke="#000" stroke-width="1"/><path d="M50.2 342.9 L56.2 336.9 L56.2 342.9 Z" fill="#5c5c5c"/>
<path d="M10.9 349.9 L23 349.9 L17.9 365.9 L7 360.8 Z" fill="#7d95f0" stroke="#223" stroke-width="0.9"/><path d="M9 355.3 L20.5 358 M16.9 349.9 L12.5 363.3" stroke="#3a4ab0" stroke-width="0.7"/><rect x="9.5" y="348.5" width="2.8" height="2.8" fill="#fff" stroke="#000" stroke-width="1"/><rect x="21.6" y="348.5" width="2.8" height="2.8" fill="#fff" stroke="#000" stroke-width="1"/><rect x="5.6" y="359.4" width="2.8" height="2.8" fill="#fff" stroke="#000" stroke-width="1"/><rect x="16.5" y="364.5" width="2.8" height="2.8" fill="#fff" stroke="#000" stroke-width="1"/><path d="M22.2 370.0 L28.2 364.0 L28.2 370.0 Z" fill="#5c5c5c"/>
<path d="M34.5 353 L42.5 348 Q51 350 51 358 L51 366.5 L45 368.5 L45 361 Q44 355 34.5 353 Z" fill="#fff" stroke="#222" stroke-width="0.9"/><path d="M38 351 L42.5 348 Q51 350 51 358 L51 361.5 L45 364 Q44.5 355 38 351Z" fill="#5b74e0"/><path d="M50.2 370.0 L56.2 364.0 L56.2 370.0 Z" fill="#5c5c5c"/>
<path d="M6.2 381 L14 377 L23 380 L23 391.5 L15 395.3 L6.2 392 Z" fill="url(#lbox)" stroke="#111" stroke-width="0.9"/><path d="M6.2 381 L15 384.3 L23 380 M15 384.3 V395.3" stroke="#2a3a90" stroke-width="0.6" fill="none"/><path d="M22.2 398.4 L28.2 392.4 L28.2 398.4 Z" fill="#5c5c5c"/>
<circle cx="46.7" cy="382" r="7" fill="url(#lsph)" stroke="#111" stroke-width="0.9"/><circle cx="39.3" cy="389.4" r="7.3" fill="url(#lsph)" stroke="#111" stroke-width="0.9"/><path d="M33 388 Q39 391 46 387 M39 382.5 Q41 390 38 396 M40.5 381 Q46.5 384 53.5 381 M46 375.2 Q48 381 45 388" stroke="#223" stroke-width="0.5" fill="none"/><path d="M50.2 398.4 L56.2 392.4 L56.2 398.4 Z" fill="#5c5c5c"/>
<ellipse cx="14.7" cy="406" rx="5.5" ry="2.4" fill="#fff" stroke="#111" stroke-width="0.9"/><path d="M4 411.5 Q14.7 414.5 25.7 411.5 L25.7 422 Q14.7 426 4 422 Z" fill="#6a82e6" stroke="#111" stroke-width="0.9"/><ellipse cx="14.7" cy="419" rx="5.5" ry="2.4" fill="none" stroke="#fff" stroke-width="1.4"/><path d="M22.2 426.4 L28.2 420.4 L28.2 426.4 Z" fill="#5c5c5c"/>
<path d="M32.5 417 L40 404 Q47 407 53.5 408 L47 421 Q39 419 32.5 417Z" fill="#8ea2f0" stroke="#222" stroke-width="0.9"/><path d="M36 410 Q44 413 50 414.5 M43.5 405.5 L39 418.5 M36.5 410.5 L46 407.5 L42 416" stroke="#4050a0" stroke-width="0.6" fill="none"/><path d="M50.2 426.4 L56.2 420.4 L56.2 426.4 Z" fill="#5c5c5c"/>
<path d="M5 437 L8 432 L11 434 L14 431 L17 434 L15 437 L18 440 L14 442 L12 445 L8 443 L6 440 Z" fill="#f0a010" stroke="#553300" stroke-width="0.7"/><path d="M13 444 L17 440 L20 442 L23 441 L25 445 L22 448 L24 451 L20 452 L16 451 L13 449 Z" fill="#fff" stroke="#333" stroke-width="0.8"/>
<path d="M30.5 452 L33 437 L37 446 L48.5 433.5 L42 447 L52 446 L44 451 L52 452 Z" fill="#f7a800" stroke="#8a5000" stroke-width="0.6"/>
<rect x="4.5" y="468.3" width="11" height="5.2" fill="#fff" stroke="#111" stroke-width="0.9"/><path d="M13.7 460 L21 460 L15 473 Z" fill="#1f2f8a"/><path d="M16 473.5 L20 469.7 L24 474 L20.3 478.3 Z" fill="#fff" stroke="#333" stroke-width="0.8"/>
<rect x="33.3" y="469.6" width="18.2" height="5" fill="#fff" stroke="#111" stroke-width="0.9"/><path d="M42.7 474 L45 461 L49.2 461 Z" fill="#1f2f8a"/>
<g stroke="#000" stroke-width="2.2"><circle cx="14.8" cy="494.8" r="3.6"/><circle cx="11.3" cy="500" r="3.6"/><circle cx="18.5" cy="500" r="3.6"/></g><circle cx="14.8" cy="494.8" r="3.4" fill="#9aa0f6"/><circle cx="18.5" cy="500" r="3.4" fill="#1a2080"/><circle cx="11.3" cy="500" r="3.4" fill="#fff"/><path d="M22.2 510.9 L28.2 504.9 L28.2 510.9 Z" fill="#5c5c5c"/>
<circle cx="42.7" cy="494" r="3.3" fill="#9aa0f6" stroke="#555" stroke-width="0.5"/><circle cx="38.2" cy="501.7" r="3.4" fill="#fff" stroke="#333" stroke-width="0.7"/><circle cx="47.9" cy="501.7" r="3.4" fill="#1a2080" stroke="#111" stroke-width="0.7"/>
<path d="M5.5 521 Q11 519 14.5 523 Q19 527 20 531 V536" fill="none" stroke="#000" stroke-width="1.4"/><rect x="8.6" y="519.6" width="2.8" height="2.8" fill="#fff" stroke="#000" stroke-width="1"/><rect x="18.6" y="529.6" width="2.8" height="2.8" fill="#fff" stroke="#000" stroke-width="1"/>
<path d="M33 521.5 Q43 520.5 48 530 L49 539" fill="none" stroke="#000" stroke-width="1.6"/><path d="M32 517 H40 L47 520 L52 527" fill="none" stroke="#000" stroke-width="0.8" stroke-dasharray="1 1"/><rect x="38.6" y="515.6" width="2.8" height="2.8" fill="#fff" stroke="#000" stroke-width="1"/><rect x="50.6" y="527.1" width="2.8" height="2.8" fill="#fff" stroke="#000" stroke-width="1"/><path d="M50.2 539.0 L56.2 533.0 L56.2 539.0 Z" fill="#5c5c5c"/>
</svg>
<svg class="a" style="left:0;top:0" width="960" height="539" viewBox="0 0 960 539">
 <defs><clipPath id="vpc"><rect x="64" y="196" width="896" height="343"/></clipPath>
 <linearGradient id="lf" x1="0" y1="0" x2="1" y2="1"><stop offset="0" stop-color="#a3a4a7"/><stop offset="1" stop-color="#a0a1a4"/></linearGradient></defs>
 <rect x="64" y="196" width="896" height="343" fill="#9ea4ac"/>
 <g clip-path="url(#vpc)">
  <path d="M-399.5 372.6L1399.6 107.3M-399.8 379.9L1399.7 111.3M-398.5 387.2L1399.8 115.3M-398.8 394.9L1399.9 119.4M-399.1 402.9L1399.6 123.7M-399.4 411.0L1399.7 128.1M-399.7 419.3L1399.9 132.5M-398.3 427.6L1400.0 137.1M-398.7 436.4L1399.6 141.9M-399.3 454.7L1399.9 151.7M-399.7 464.3L1399.5 156.9M-398.2 473.8L1399.6 162.1M-398.5 483.9L1399.8 167.5M-398.9 494.2L1399.9 173.1M-399.3 505.0L1399.5 178.9M-399.7 516.0L1399.7 184.8M-398.0 527.0L1399.8 190.9M-398.4 538.7L1400.0 197.2M-399.2 563.3L1399.7 210.5M-399.6 576.2L1399.9 217.4M-397.8 589.1L1399.4 224.6M-398.2 602.9L1399.6 232.0M-398.7 617.1L1399.7 239.6M-399.1 631.9L1399.9 247.5M-399.5 647.2L1399.4 255.9M-400.0 663.0L1399.6 264.3M-398.1 678.9L1399.8 273.1M-399.0 713.7L1399.4 291.9M-399.5 732.1L1399.6 301.7M-400.0 751.2L1399.8 312.0M-397.8 770.5L1399.2 322.8M-398.3 791.2L1399.4 333.9M-398.8 812.8L1399.6 345.5M-399.4 835.4L1399.9 357.6M-399.9 859.0L1399.2 370.4M-397.5 882.8L1399.5 383.6M-275.1 899.6L1399.9 411.8M-182.4 899.2L1399.2 427.3M-92.6 899.7L1399.5 443.2M-0.1 899.3L1399.7 459.9M89.7 899.8L1399.0 477.9M182.0 899.4L1399.2 496.5M271.8 899.8L1399.5 516.1M364.0 899.5L1399.8 536.8M453.7 899.9L1399.0 559.1M635.5 900.0L1399.6 607.1M727.4 899.6L1399.9 633.4M819.2 899.2L1398.9 662.0M908.8 899.7L1399.3 692.1M1000.4 899.3L1399.6 724.2M1090.0 899.7L1400.0 758.7M1181.5 899.4L1398.9 796.6M1271.1 899.8L1399.3 836.8M1362.4 899.4L1399.7 880.3M-372.6 361.6L-370.9 899.6M-311.4 352.6L-251.2 899.3M-281.6 348.3L-191.4 899.2M-252.2 344.0L-131.6 899.1M-223.2 339.8L-71.9 898.9M-194.7 335.7L-12.2 898.8M-166.6 331.6L47.9 900.0M-139.0 327.5L107.6 899.9M-111.8 323.6L167.3 899.7M-84.9 319.7L226.9 899.6M-32.4 312.0L346.1 899.4M-6.7 308.3L405.6 899.2M18.6 304.6L465.1 899.1M43.5 301.0L524.5 899.0M68.1 297.4L583.9 898.9M92.4 293.8L643.3 898.7M116.3 290.4L703.9 899.9M139.9 286.9L763.3 899.8M163.1 283.5L822.6 899.7M208.7 276.9L941.2 899.4M231.0 273.6L1000.4 899.3M253.1 270.4L1059.6 899.2M274.8 267.3L1118.8 899.0M296.2 264.2L1177.9 898.9M317.4 261.1L1237.0 898.8M338.3 258.0L1298.0 900.0M358.9 255.0L1357.1 899.8M379.3 252.1L1399.8 889.5M419.2 246.3L1399.1 820.4M438.8 243.4L1398.8 788.9M458.1 240.6L1398.6 759.4M477.2 237.8L1398.3 731.5M496.1 235.1L1399.7 706.1M514.7 232.3L1399.5 681.2M533.1 229.7L1399.2 657.6M551.3 227.0L1399.0 635.2M569.2 224.4L1398.7 613.9M604.5 219.3L1399.7 575.1M621.8 216.7L1399.5 556.7M638.9 214.3L1399.3 539.1M655.8 211.8L1399.1 522.3M672.5 209.4L1398.9 506.3M689.1 206.9L1400.0 491.5M705.4 204.6L1399.7 476.7M721.5 202.2L1399.5 462.6M737.5 199.9L1399.3 449.0M768.9 195.3L1399.0 423.5M784.3 193.1L1399.9 411.8M799.5 190.9L1399.7 400.2M814.6 188.7L1399.5 389.0M829.5 186.5L1399.4 378.2M844.3 184.3L1399.2 367.8M858.9 182.2L1399.0 357.8M873.3 180.1L1399.9 348.4M887.6 178.0L1399.7 339.0M915.7 173.9L1399.4 321.1M929.5 171.9L1399.2 312.6M943.2 169.9L1399.1 304.4M956.7 168.0L1399.9 296.7M970.1 166.0L1399.7 288.9M983.4 164.1L1399.6 281.4M996.5 162.2L1399.4 274.1M1009.5 160.3L1399.3 267.0M1022.3 158.4L1399.1 260.1M1047.6 154.7L1399.7 247.2M1060.1 152.9L1399.6 240.8M1072.4 151.1L1399.5 234.7M1084.7 149.3L1399.3 228.7M1096.7 147.6L1400.0 223.1M1108.7 145.8L1399.9 217.4M1120.6 144.1L1399.7 211.8M1132.3 142.4L1399.6 206.4M1143.9 140.7L1399.5 201.2M1166.9 137.4L1400.0 191.2M1178.1 135.7L1399.8 186.3M1189.3 134.1L1399.7 181.6M1200.4 132.5L1399.6 176.9M1211.4 130.9L1399.5 172.3M1222.2 129.3L1399.4 167.9M1233.0 127.7L1400.0 163.7M1243.7 126.2L1399.8 159.5M1254.3 124.6L1399.7 155.3M1275.1 121.6L1399.5 147.3M1285.4 120.1L1399.4 143.4M1295.6 118.6L1399.9 139.7M1305.7 117.2L1399.8 136.0M1315.7 115.7L1399.7 132.3M1325.6 114.3L1399.6 128.8M1335.4 112.8L1399.5 125.3M1345.1 111.4L1399.4 121.8M1354.8 110.0L1399.9 118.6M1373.8 107.2L1399.7 112.1M1383.2 105.9L1399.6 108.9M1392.5 104.5L1399.5 105.8" stroke="#92979e" stroke-width="1" fill="none"/>
  <path d="M-399.2 365.4L1399.9 103.4M-399.0 445.4L1399.7 146.7M-398.8 550.8L1399.5 203.8M-398.5 696.0L1400.0 282.2M-365.0 899.2L1399.7 397.4M545.8 899.5L1399.3 582.4M-341.8 357.1L-311.1 899.4M-58.5 315.8L286.5 899.5M186.1 280.2L881.9 899.5M399.3 249.1L1399.4 853.8M586.9 221.8L1400.0 594.3M753.3 197.6L1399.1 436.0M901.7 176.0L1399.6 329.9M1035.1 156.6L1399.9 253.7M1155.5 139.0L1399.3 196.0M1264.7 123.1L1399.6 151.2M1364.3 108.6L1399.8 115.3" stroke="#767a80" stroke-width="1" fill="none"/>
  <path d="M186.1 280.2L881.9 899.5" stroke="#43a047" stroke-width="2" fill="none"/>
  <path d="M825.8 226.9 L1000 290.1 L1000 500 L960 513 L949.8 539 L796 539 L720 490.5 Z" fill="url(#lf)"/>
  <path d="M720 490.5 L796 539 L510 539 Z" fill="#6a6b6d"/>
  <path d="M510 539 L720 490.5 L825.8 226.9 L1000 290.1 M720 490.5 L796 539 M960 513 L949.8 539" stroke="#000" stroke-width="2" fill="none" stroke-linejoin="round"/>
 </g>
 <rect x="64" y="196" width="88" height="18.5" fill="#8fa5c1"/>
 <text x="73.5" y="210" font-family="Liberation Sans" font-size="12" letter-spacing="-0.25" fill="#000">Perspective</text>
 <rect x="141" y="199" width="1.3" height="14.5" fill="#000"/>
 <path d="M143.5 204.3 L149.7 204.3 L146.6 207.9 Z" fill="#000"/>
 <g font-family="Liberation Sans" font-size="16" fill="#a1a2a5">
  <text x="815.3" y="532" textLength="135" lengthAdjust="spacingAndGlyphs" fill="#f4f0ea" opacity="0.8">© grafica2d3d.com</text>
  <text x="816.8" y="533.5" textLength="135" lengthAdjust="spacingAndGlyphs" fill="#404040" opacity="0.55">© grafica2d3d.com</text>
  <text x="816" y="532.7" textLength="135" lengthAdjust="spacingAndGlyphs">© grafica2d3d.com</text>
 </g>
</svg>
<svg class="a" style="left:0;top:0" width="400" height="200" viewBox="0 0 400 200"><rect x="203.5" y="153.5" width="152.3" height="18" fill="#ffffe1" stroke="#000" stroke-width="1"/><path d="M207.5 161 Q207.5 158.3 211.2 158.3 Q214.8 158.3 214.8 161 L214.8 165.2 Q214.8 168.6 211.2 168.6 Q207.5 168.6 207.5 165.2 Z" fill="#fff" stroke="#000" stroke-width="1.2"/><path d="M211.2 158.3 V162.5 M207.5 162.5 H214.8" stroke="#000" stroke-width="1"/><text x="222" y="166.8" font-family="Liberation Sans" font-size="10.5" textLength="126" lengthAdjust="spacingAndGlyphs" fill="#000">Imposta PianoC per 3 punti</text></svg>
</body></html>
